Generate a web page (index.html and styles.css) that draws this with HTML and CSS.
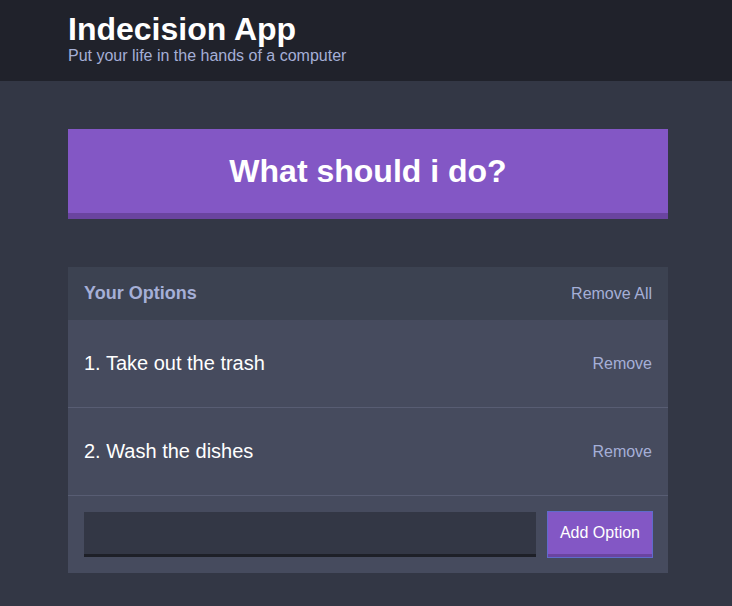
FILE: index.html
```html
<!DOCTYPE html>
<html lang="en">
<head>
<meta charset="utf-8">
<title>Indecision App</title>
<link rel="stylesheet" href="styles.css">
</head>
<body>
  <header class="header">
    <div class="container">
      <h1 class="header__title">Indecision App</h1>
      <h2 class="header__subtitle">Put your life in the hands of a computer</h2>
    </div>
  </header>
  <main class="container">
    <button class="big-button">What should i do?</button>
    <section class="widget">
      <div class="widget-header">
        <h3 class="widget-header__title">Your Options</h3>
        <button class="button button--link">Remove All</button>
      </div>
      <div class="option">
        <p class="option__text">1. Take out the trash</p>
        <button class="button button--link">Remove</button>
      </div>
      <div class="option">
        <p class="option__text">2. Wash the dishes</p>
        <button class="button button--link">Remove</button>
      </div>
      <form class="add-option">
        <input class="add-option__input" type="text" name="option">
        <button class="button button--add" type="button">Add Option</button>
      </form>
    </section>
  </main>
</body>
</html>
```
FILE: styles.css
```css
* { box-sizing: border-box; }
html, body { margin: 0; padding: 0; }
body {
  background: #333745;
  font-family: "Liberation Sans", Arial, sans-serif;
  font-size: 16px;
  color: #fff;
}
.container {
  max-width: 604px;
  margin: 0 auto;
  padding-left: 4px;
}
.header {
  background: #20222b;
  padding: 11px 0 16px;
}
.header__title {
  margin: 0;
  font-size: 32px;
  line-height: 36px;
  font-weight: bold;
  color: #fff;
}
.header__subtitle {
  margin: 0;
  font-size: 16px;
  line-height: 18px;
  font-weight: normal;
  color: #a5afd7;
}
.big-button {
  display: block;
  width: 100%;
  margin: 48px 0 48px;
  padding: 24px;
  background: #8357c5;
  border: none;
  border-bottom: 6px solid #6a44a0;
  color: #fff;
  font-family: inherit;
  font-size: 32px;
  line-height: 36px;
  font-weight: bold;
}
.widget {
  background: #464b5e;
}
.widget-header {
  background: #3c4251;
  display: flex;
  justify-content: space-between;
  align-items: center;
  padding: 16px;
  height: 53px;
}
.widget-header__title {
  margin: 0;
  font-size: 18px;
  line-height: 21px;
  font-weight: bold;
  color: #a5afd7;
}
.button {
  font-family: inherit;
  font-size: 16px;
  line-height: 18px;
  cursor: pointer;
}
.button--link {
  background: none;
  border: none;
  padding: 0;
  color: #a5afd7;
}
.option {
  display: flex;
  justify-content: space-between;
  align-items: center;
  padding: 16px;
  border-bottom: 1px solid #585d73;
  height: 88px;
}
.option__text {
  margin: 0;
  font-size: 20px;
  line-height: 23px;
  color: #fff;
}
.add-option {
  display: flex;
  padding: 16px;
  gap: 12px;
}
.add-option__input {
  flex-grow: 1;
  margin: 0;
  background: #333745;
  border: none;
  border-bottom: 3px solid #1e2028;
  color: #a5afd7;
  padding: 8px;
  font-family: inherit;
  font-size: 16px;
}
.button--add {
  background: #8357c5;
  border: none;
  border-bottom: 3px solid #6a44a0;
  outline: 1px solid #5f6bcc;
  color: #fff;
  padding: 12px;
  height: 45px;
}
```
